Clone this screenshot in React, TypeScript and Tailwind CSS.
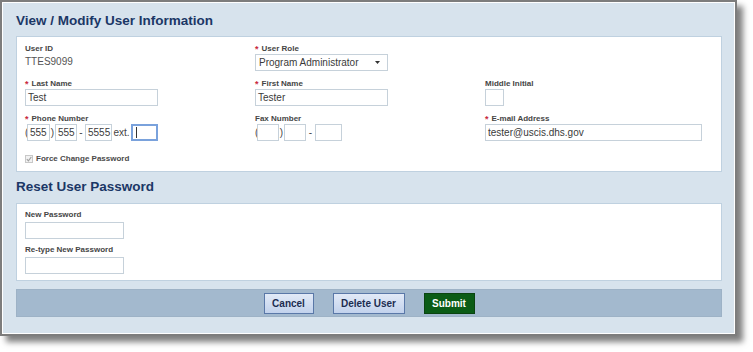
const font = { fontFamily: '"Liberation Sans", Arial, sans-serif' };

const Req = () => <span className="text-[#c8283c] mr-[3px] text-[9px] leading-[10px]">*</span>;

const Label = ({ text, req }: { text: string; req?: boolean }) => (
  <div className="h-[10px] leading-[10px] text-[8px] font-bold text-[#454545] flex items-center">
    {req && <Req />}
    {text}
  </div>
);

const Box = ({ w, value, focus }: { w: string; value?: string; focus?: boolean }) => (
  <div
    className={`${w} h-[17px] shrink-0 border ${
      focus ? "border-[#7aa2dc] border-2" : "border-[#c6d1da]"
    } bg-white px-[2px] text-[10px] leading-[15px] text-[#3a3a3a] flex items-center`}
  >
    {focus && <span className="w-px h-[11px] bg-[#333] ml-[1px]" />}
    {value}
  </div>
);

const Sep = ({ w, text }: { w: string; text: string }) => (
  <span className={`${w} shrink-0 text-center text-[10px] text-[#444] leading-[17px]`}>{text}</span>
);

export default function App() {
  return (
    <div className="w-[753px] h-[352px] bg-white" style={font}>
      <div className="w-[737px] h-[336px] border-2 border-[#7d7d7d] shadow-[6px_6px_6px_rgba(0,0,0,0.5)]">
        <div className="h-full border border-white bg-[#d7e3ed] pl-[13px] pr-[12px]">
          <h1 className="pt-[10px] pb-[7px] h-[33px] text-[13.5px] leading-[16px] font-bold text-[#1b3766]">
            View / Modify User Information
          </h1>

          <div className="bg-white border border-[#bfd1e0] h-[136px] pl-[8px] pt-[7px]">
            <div className="grid grid-cols-[230px_230px_1fr] gap-y-[8px]">
              <div>
                <Label text="User ID" />
                <div className="text-[10px] leading-[14px] text-[#555] mt-[1px]">TTES9099</div>
              </div>
              <div>
                <Label text="User Role" req />
                <div className="w-[133px] h-[17px] border border-[#c6d1da] flex items-center justify-between px-[3px] text-[10px] text-[#3a3a3a]">
                  Program Administrator
                  <svg width="5" height="3" viewBox="0 0 5 3" className="mr-[4px]">
                    <path d="M0 0h5L2.5 3z" fill="#333" />
                  </svg>
                </div>
              </div>
              <div />

              <div>
                <Label text="Last Name" req />
                <Box w="w-[133px]" value="Test" />
              </div>
              <div>
                <Label text="First Name" req />
                <Box w="w-[133px]" value="Tester" />
              </div>
              <div>
                <Label text="Middle Initial" />
                <Box w="w-[19px]" />
              </div>

              <div>
                <Label text="Phone Number" req />
                <div className="flex items-center">
                  <Sep w="w-[2px]" text="(" />
                  <Box w="w-[23px]" value="555" />
                  <Sep w="w-[5px]" text=")" />
                  <Box w="w-[22px]" value="555" />
                  <Sep w="w-[8px]" text="-" />
                  <Box w="w-[27px]" value="5555" />
                  <Sep w="w-[19px]" text="ext." />
                  <Box w="w-[27px]" focus />
                </div>
              </div>
              <div>
                <Label text="Fax Number" />
                <div className="flex items-center">
                  <Sep w="w-[2px]" text="(" />
                  <Box w="w-[22px]" />
                  <Sep w="w-[5px]" text=")" />
                  <Box w="w-[22px]" />
                  <Sep w="w-[9px]" text="-" />
                  <Box w="w-[27px]" />
                </div>
              </div>
              <div>
                <Label text="E-mail Address" req />
                <Box w="w-[217px]" value="tester@uscis.dhs.gov" />
              </div>
            </div>

            <div className="mt-[13px] h-[10px] flex items-center gap-[3px] text-[8px] font-bold text-[#4a4a4a]">
              <span className="w-[8px] h-[8px] border border-[#c8c8c8] bg-[#f2f2f2] flex items-center justify-center">
                <svg width="6" height="6" viewBox="0 0 6 6">
                  <path d="M0.8 3.2L2.4 4.8L5.3 1" stroke="#a0a0a0" strokeWidth="1.2" fill="none" />
                </svg>
              </span>
              Force Change Password
            </div>
          </div>

          <h2 className="mt-[7px] mb-[8px] text-[13.5px] leading-[16px] font-bold text-[#1b3766]">
            Reset User Password
          </h2>

          <div className="bg-white border border-[#bfd1e0] h-[78px] pl-[8px] pt-[6px]">
            <Label text="New Password" />
            <div className="mt-[2px]">
              <Box w="w-[99px]" />
            </div>
            <div className="mt-[6px]">
              <Label text="Re-type New Password" />
            </div>
            <div className="mt-[2px]">
              <Box w="w-[99px]" />
            </div>
          </div>

          <div className="mt-[8px] h-[28px] bg-[#a3b9ce] border border-[#9db2c6] flex items-center justify-center gap-[19px]">
            <button className="w-[50px] h-[21px] border border-[#5a78a8] bg-gradient-to-b from-[#e2eaf7] to-[#c2d2ec] text-[10px] font-bold text-[#1c2c50]">
              Cancel
            </button>
            <button className="w-[72px] h-[21px] border border-[#5a78a8] bg-gradient-to-b from-[#e2eaf7] to-[#c2d2ec] text-[10px] font-bold text-[#1c2c50]">
              Delete User
            </button>
            <button className="w-[51px] h-[21px] border border-[#0a4410] bg-[#0b5c16] text-[10px] font-bold text-white">
              Submit
            </button>
          </div>
        </div>
      </div>
    </div>
  );
}
